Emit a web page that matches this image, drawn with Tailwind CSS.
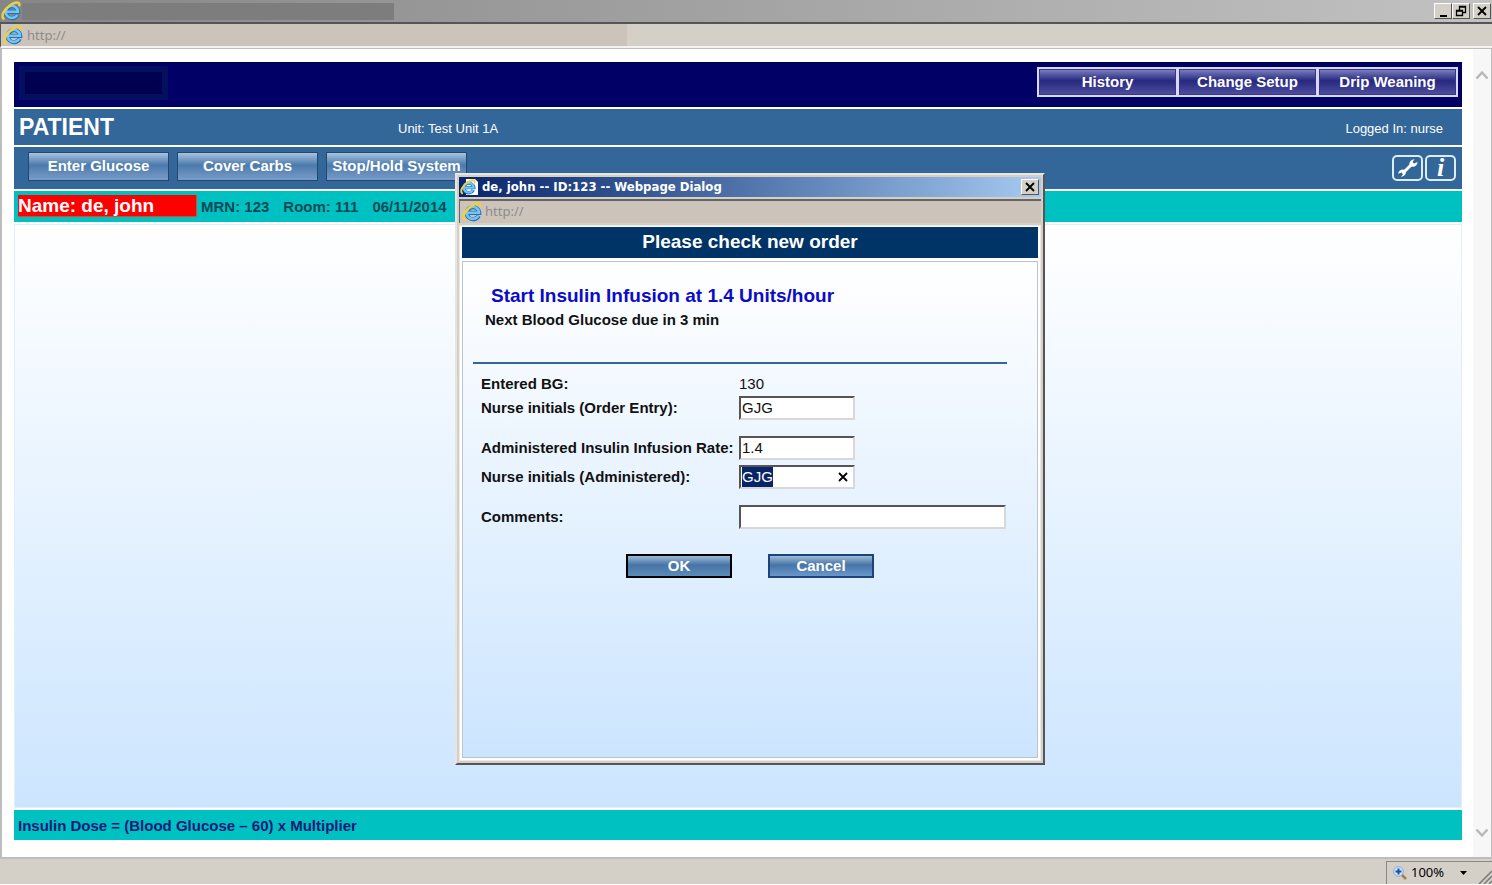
<!DOCTYPE html>
<html lang="en">
<head>
<meta charset="utf-8">
<title>Patient</title>
<script src="https://cdn.jsdelivr.net/npm/@tailwindcss/browser@4"></script>
</head>
<body class="relative flex h-screen flex-col overflow-hidden bg-[#d4d0c8] font-['Liberation_Sans',Arial,sans-serif] text-[15px] text-[#111]">
<svg class="hidden">
  <defs>
    <symbol id="ie" viewBox="0 0 20 20">
      <path d="M16.600 13.800A6.200 6 0 1 1 17.200 10.800H6" fill="none" stroke="#2470b8" stroke-width="4.200"/>
      <path d="M16.200 13.800A6.200 6 0 1 1 17 10.800H6" fill="none" stroke="#74c4f4" stroke-width="2.600"/>
      <path d="M2.600 17.800C-.5 15 3.500 8 9 4.300C14 1 19 .2 18.400 4.300" fill="none" stroke="#f0d040" stroke-width="2.400" stroke-linecap="round"/>
    </symbol>
    <symbol id="x" viewBox="0 0 10 10"><path d="M1 1L9 9M9 1L1 9" stroke="#000" stroke-width="1.800" fill="none"/></symbol>
  </defs>
</svg>

<header class="flex h-[22px] shrink-0 items-center bg-linear-to-r from-[#868686] to-[#c2c2c2] pr-px">
  <svg class="mr-px ml-px size-5"><use href="#ie"/></svg>
  <div class="h-[17px] w-[372px] bg-[#7d7d7d]"></div>
  <div class="ml-auto flex">
    <button aria-label="Minimize" class="flex h-4 w-[18px] items-end justify-center border border-t-white border-l-white border-r-[#555] border-b-[#555] bg-[#d4d0c8] pb-px"><span class="h-0.5 w-[7px] bg-black"></span></button>
    <button aria-label="Restore" class="flex h-4 w-[18px] items-center justify-center border border-t-white border-l-white border-r-[#555] border-b-[#555] bg-[#d4d0c8]"><svg class="h-3 w-3" viewBox="0 0 12 12" fill="none" stroke="#000"><path d="M4.500 5V1.500H10.500V7.500H8M4 2H11M1.500 5.500H7.500V10.500H1.500ZM1 6H8" stroke-width="1.300"/></svg></button>
    <button aria-label="Close" class="ml-[3px] flex h-4 w-[18px] items-center justify-center border border-t-white border-l-white border-r-[#555] border-b-[#555] bg-[#d4d0c8]"><svg class="size-[10px]"><use href="#x"/></svg></button>
  </div>
</header>
<div class="flex h-[26px] shrink-0 items-center border-t-2 border-b-2 border-l border-t-[#555] border-b-[#f4f2ee] border-l-[#555] bg-linear-to-r from-[#ccc4ba] from-42% to-[#d4d0c8] to-42% pl-[2px] font-['Noto_Sans',sans-serif] text-[13px] text-[#8c8c8c]">
  <svg class="mr-1 size-5"><use href="#ie"/></svg><span class="pt-[2px]">http://</span>
</div>

<div class="flex min-h-0 flex-1 border-2 border-t border-r border-[#bdbdbd] bg-white">
  <main class="mt-[13px] mr-[11px] mb-[17px] ml-3 flex flex-1 flex-col gap-[2px]">
    <div class="flex h-[45px] items-start justify-between bg-[#000066] pr-1 outline-1 -outline-offset-1 outline-[#00004c]">
      <div class="mt-1 ml-[5px] h-[34px] w-[149px] border-[6px] border-[#04105f] bg-[#000050]"></div>
      <nav class="mt-[5px] flex font-bold text-white">
        <button class="h-[30px] w-[141px] border-2 border-[#d8d8f0] bg-linear-to-b from-[#8484c4] via-[#28287e] via-45% to-[#5050a0] pt-px inset-ring inset-ring-[#34348a]">History</button>
        <button class="-ml-px h-[30px] w-[141px] border-2 border-[#d8d8f0] bg-linear-to-b from-[#8484c4] via-[#28287e] via-45% to-[#5050a0] pt-px inset-ring inset-ring-[#34348a]">Change Setup</button>
        <button class="-ml-px h-[30px] w-[141px] border-2 border-[#d8d8f0] bg-linear-to-b from-[#8484c4] via-[#28287e] via-45% to-[#5050a0] pt-px inset-ring inset-ring-[#34348a]">Drip Weaning</button>
      </nav>
    </div>
    <div class="flex h-9 items-center bg-[#336699] pr-[19px] pl-[5px] text-[13px] text-white">
      <h1 class="w-[379px] pb-px text-[23px] leading-8 font-bold">PATIENT</h1>
      <span class="pt-1">Unit: Test Unit 1A</span>
      <span class="ml-auto pt-1">Logged In: nurse</span>
    </div>
    <div class="flex h-[42px] items-center bg-[#336699] pr-[6px] pl-3.5">
      <div class="mb-1 flex gap-2 font-bold whitespace-nowrap text-white">
        <button class="h-[29px] w-[141px] border border-[#204870] bg-linear-to-b from-[#a9c3dd] via-[#4b7aac] via-45% to-[#7a9cc8] pt-px">Enter Glucose</button>
        <button class="h-[29px] w-[141px] border border-[#204870] bg-linear-to-b from-[#a9c3dd] via-[#4b7aac] via-45% to-[#7a9cc8] pt-px">Cover Carbs</button>
        <button class="h-[29px] w-[141px] border border-[#204870] bg-linear-to-b from-[#a9c3dd] via-[#4b7aac] via-45% to-[#7a9cc8] pt-px">Stop/Hold System</button>
      </div>
      <div class="ml-auto flex gap-[2px]">
        <button aria-label="Settings" class="flex h-[26px] w-[31px] items-center justify-center rounded-[5px] border-2 border-[#dcecfa]"><svg class="h-5 w-[22px]" viewBox="0 0 22 20"><path d="M6.500 14.500L15 6" stroke="#fff" stroke-width="3"/><path d="M12.800 8C11.500 5 13.500 1.500 17.500 1.300L15.500 4L17 5.600L20.500 4C20.500 8 16.500 9.900 12.800 8ZM8.500 12.300C9.800 15.200 8 18.300 4 18.700L6 16.300L4.600 14.600L1.200 15.800C1.500 12.300 5.500 10.200 8.500 12.300Z" fill="#fff"/></svg></button>
        <button aria-label="Information" class="flex h-[26px] w-[31px] items-center justify-center rounded-[5px] border-2 border-[#dcecfa] font-['Liberation_Serif',serif] text-[26px] leading-5 font-bold text-white italic">i</button>
      </div>
    </div>
    <div class="flex h-[31px] items-start bg-[#00c1c1] pt-1 pl-1 font-bold">
      <div class="h-[22px] w-[179px] border border-t-0 border-l-0 border-[#d05030] bg-[#ff0000] text-[19px] leading-[22px] text-white">Name: de, john</div>
      <div class="ml-1 flex gap-3.5 leading-6 text-[#0b4a58]"><span>MRN: 123</span><span>Room: 111</span><span>06/11/2014</span></div>
    </div>
    <div class="flex-1 border border-[#e4eef8] bg-linear-to-b from-white to-[#cce5ff]"></div>
    <div class="h-[30px] bg-[#00c1c1] pl-1 leading-8 font-bold text-[#0a1a78]">Insulin Dose = (Blood Glucose – 60) x Multiplier</div>
  </main>
  <div class="flex w-[18px] flex-col items-center justify-between bg-[#f7f7f7] pt-5 pb-[18px]">
    <svg class="h-3 w-3.5" viewBox="0 0 14 12" fill="none" stroke="#b8b8b8" stroke-width="2.500"><path d="M1.500 9.500L7 3.500L12.500 9.500"/></svg>
    <svg class="h-3 w-3.5" viewBox="0 0 14 12" fill="none" stroke="#b8b8b8" stroke-width="2.500"><path d="M1.500 2.500L7 8.500L12.500 2.500"/></svg>
  </div>
</div>

<footer class="flex h-[26px] shrink-0 items-end justify-end border-b border-white">
  <div class="flex h-[23px] w-[106px] items-center border-t border-l border-[#888] pl-[6px] font-['Noto_Sans',sans-serif] text-[13px] text-black">
    <svg class="mr-1 size-3.5" viewBox="0 0 14 14"><path d="M8.500 8.500L13 13" stroke="#a87c50" stroke-width="2.500"/><circle cx="5.500" cy="5.500" r="4.800" fill="#cfe6fa" stroke="#7fa8d8"/><path d="M5.500 2.500V8.500M2.500 5.500H8.500" stroke="#1a50a8" stroke-width="2"/></svg>
    100%
    <svg class="ml-4 h-1 w-[7px]" viewBox="0 0 7 4"><path d="M0 0H7L3.500 4Z"/></svg>
    <svg class="mt-auto ml-auto size-3.5" viewBox="0 0 14 14" stroke="#777" stroke-width="1.500"><path d="M1 14L14 1M6 14L14 6M11 14L14 11"/></svg>
  </div>
</footer>

<div role="dialog" aria-labelledby="dialog-title" class="absolute top-[173px] left-[455px] flex h-[592px] w-[590px] flex-col border-2 border-t-[#e8e5df] border-r-[#555] border-b-[#555] border-l-[#e8e5df] bg-[#d4d0c8] p-[2px]">
  <div class="flex h-5 shrink-0 items-center bg-linear-to-r from-[#0a246a] to-[#a6caf0] pr-[2px] font-['DejaVu_Sans_Condensed','DejaVu_Sans',sans-serif] text-[13px] font-bold text-white">
    <svg class="mr-[3px] h-[18px] w-5" viewBox="0 0 20 18"><path d="M7 1H16L19 4V17H7Z" fill="#fff"/><use href="#ie" x="1" y="1" width="16" height="16"/></svg>
    <span id="dialog-title">de, john -- ID:123 -- Webpage Dialog</span>
    <button aria-label="Close dialog" class="ml-auto flex h-4 w-[18px] items-center justify-center border border-t-white border-r-[#555] border-b-[#555] border-l-white bg-[#d4d0c8]"><svg class="size-[10px]"><use href="#x"/></svg></button>
  </div>
  <div class="mt-[2px] flex h-6 shrink-0 items-center border-t-2 border-l border-[#666] bg-[#ccc4ba] pl-[2px] font-['Noto_Sans',sans-serif] text-[13px] text-[#8c8c8c]"><svg class="mr-[3px] size-5"><use href="#ie"/></svg>http://</div>
  <div class="mt-[2px] flex flex-1 flex-col gap-[3px] border border-[#eceae6] bg-white p-[2px] pt-px">
    <h2 class="h-[31px] bg-[#003366] text-center text-[19px] leading-[30px] font-bold text-white">Please check new order</h2>
    <form class="flex flex-1 flex-col border border-[#bcc4cc] bg-linear-to-b from-white to-[#cce5ff] pr-[30px] pl-[10px]">
      <p class="mt-[22px] pl-[18px] text-[19px] leading-6 font-bold text-[#0b0bc8]">Start Insulin Infusion at 1.4 Units/hour</p>
      <p class="pl-3 leading-6 font-bold">Next Blood Glucose due in 3 min</p>
      <hr class="mt-[30px] border-t-2 border-[#336699]">
      <div class="mt-2 grid grid-cols-[258px_1fr] items-center pl-2 leading-6">
        <span class="font-bold">Entered BG:</span><span>130</span>
        <label for="order" class="font-bold">Nurse initials (Order Entry):</label>
        <input id="order" value="GJG" class="h-6 w-[116px] border-2 border-t-[#555] border-r-[#d8d8d8] border-b-[#d8d8d8] border-l-[#555] bg-white px-px">
        <label for="rate" class="mt-4 font-bold whitespace-nowrap">Administered Insulin Infusion Rate:</label>
        <input id="rate" value="1.4" class="mt-4 h-6 w-[116px] border-2 border-t-[#555] border-r-[#d8d8d8] border-b-[#d8d8d8] border-l-[#555] bg-white px-px">
        <label for="admin" class="mt-[5px] font-bold">Nurse initials (Administered):</label>
        <div class="relative mt-[5px] h-6 w-[116px]">
          <input id="admin" value="GJG" autofocus class="block h-6 w-full border-2 border-t-[#555] border-r-[#d8d8d8] border-b-[#d8d8d8] border-l-[#555] bg-white px-px outline-none selection:bg-[#0a246a] selection:text-white">
          <button type="button" aria-label="Clear" class="absolute top-[7px] right-[7px] flex"><svg class="size-[10px]"><use href="#x"/></svg></button>
        </div>
        <label for="comments" class="mt-4 font-bold">Comments:</label>
        <input id="comments" class="mt-4 h-6 w-[267px] border-2 border-t-[#555] border-r-[#d8d8d8] border-b-[#d8d8d8] border-l-[#555] bg-white px-px">
      </div>
      <div class="mt-[25px] flex gap-9 pl-[153px] font-bold text-white">
        <button type="submit" class="h-6 w-[106px] border-2 border-black bg-linear-to-b from-[#9dbbd8] via-[#4674a6] via-45% to-[#5c8cba] leading-5">OK</button>
        <button type="button" class="h-6 w-[106px] border-2 border-[#1c4478] bg-linear-to-b from-[#9dbbd8] via-[#4674a6] via-45% to-[#6a98ca] leading-5">Cancel</button>
      </div>
    </form>
  </div>
</div>
<script>
  const admin = document.getElementById('admin');
  admin.focus();
  admin.select();
</script>
</body>
</html>
